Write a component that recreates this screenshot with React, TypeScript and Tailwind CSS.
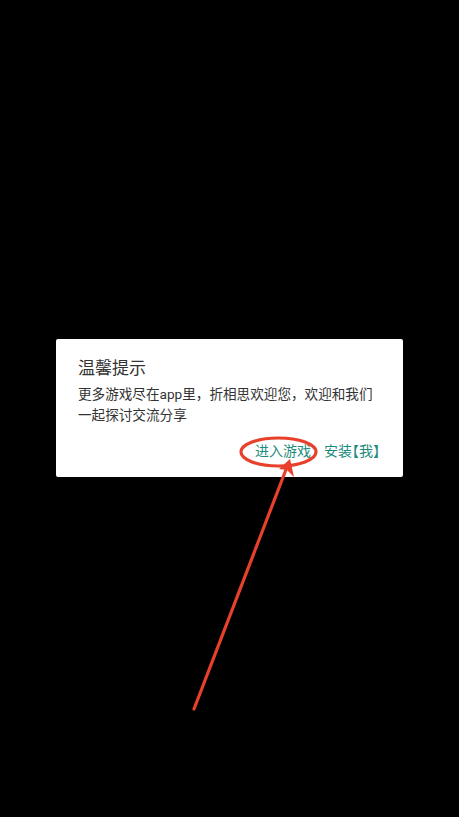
import React from "react";

export default function App() {
  return (
    <div className="relative min-h-[817px] w-full bg-black overflow-hidden" style={{ fontFamily: "Roboto, 'Noto Sans CJK SC', sans-serif" }}>
      <div className="flex flex-col pt-[339px] px-[56px]">
        <div className="w-[347px] bg-white rounded-[2px] pt-[18px] pb-[15px] pl-[22px] pr-[22px]">
          <div className="text-[17px] leading-[22px] text-[#333333]">温馨提示</div>
          <p className="mt-[5px] text-[13.6px] leading-[21px] text-[#333333]">
            更多游戏尽在app里，折相思欢迎您，欢迎和我们一起探讨交流分享
          </p>
          <div className="mt-[15px] flex justify-end gap-[13px] pr-[1px] text-[14px] leading-[21px] text-[#1e8c7c] [font-feature-settings:'halt']">
            <span>进入游戏</span>
            <span>安装【我】</span>
          </div>
        </div>
      </div>
      <svg className="absolute left-0 top-0 pointer-events-none" width="459" height="817" viewBox="0 0 459 817">
        <ellipse cx="278.5" cy="452" rx="37.5" ry="14" fill="none" stroke="#e8402a" strokeWidth="3.2" />
        <line x1="194" y1="709" x2="287" y2="467" stroke="#e8402a" strokeWidth="3.2" strokeLinecap="round" />
        <polygon points="290,459 294,477 287,470 279,469" fill="#e8402a" />
      </svg>
    </div>
  );
}
